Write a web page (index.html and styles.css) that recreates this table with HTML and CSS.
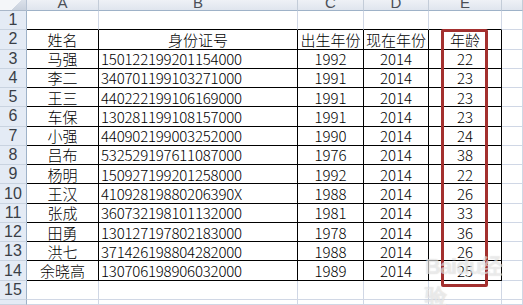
FILE: index.html
```html
<!DOCTYPE html>
<html lang="zh">
<head>
<meta charset="utf-8">
<link rel="stylesheet" href="styles.css">
</head>
<body>
<div class="sheet">
  <div class="corner"></div><div class="ch">A</div><div class="ch">B</div><div class="ch">C</div><div class="ch">D</div><div class="ch">E</div><div class="ch"></div>

  <div class="rh">1</div><div class="c top"></div><div class="c top"></div><div class="c top"></div><div class="c top"></div><div class="c top"></div><div class="c"></div>

  <div class="rh">2</div><div class="c t ctr">姓名</div><div class="c t ctr">身份证号</div><div class="c t ctr">出生年份</div><div class="c t ctr">现在年份</div><div class="c t ctr">年龄</div><div class="c"></div>

  <div class="rh">3</div><div class="c t ctr">马强</div><div class="c t id">150122199201154000</div><div class="c t ctr num">1992</div><div class="c t ctr num">2014</div><div class="c t ctr num">22</div><div class="c"></div>
  <div class="rh">4</div><div class="c t ctr">李二</div><div class="c t id">340701199103271000</div><div class="c t ctr num">1991</div><div class="c t ctr num">2014</div><div class="c t ctr num">23</div><div class="c"></div>
  <div class="rh">5</div><div class="c t ctr">王三</div><div class="c t id">440222199106169000</div><div class="c t ctr num">1991</div><div class="c t ctr num">2014</div><div class="c t ctr num">23</div><div class="c"></div>
  <div class="rh">6</div><div class="c t ctr">车保</div><div class="c t id">130281199108157000</div><div class="c t ctr num">1991</div><div class="c t ctr num">2014</div><div class="c t ctr num">23</div><div class="c"></div>
  <div class="rh">7</div><div class="c t ctr">小强</div><div class="c t id">440902199003252000</div><div class="c t ctr num">1990</div><div class="c t ctr num">2014</div><div class="c t ctr num">24</div><div class="c"></div>
  <div class="rh">8</div><div class="c t ctr">吕布</div><div class="c t id">532529197611087000</div><div class="c t ctr num">1976</div><div class="c t ctr num">2014</div><div class="c t ctr num">38</div><div class="c"></div>
  <div class="rh">9</div><div class="c t ctr">杨明</div><div class="c t id">150927199201258000</div><div class="c t ctr num">1992</div><div class="c t ctr num">2014</div><div class="c t ctr num">22</div><div class="c"></div>
  <div class="rh">10</div><div class="c t ctr">王汉</div><div class="c t id">41092819880206390X</div><div class="c t ctr num">1988</div><div class="c t ctr num">2014</div><div class="c t ctr num">26</div><div class="c"></div>
  <div class="rh">11</div><div class="c t ctr">张成</div><div class="c t id">360732198101132000</div><div class="c t ctr num">1981</div><div class="c t ctr num">2014</div><div class="c t ctr num">33</div><div class="c"></div>
  <div class="rh">12</div><div class="c t ctr">田勇</div><div class="c t id">130127197802183000</div><div class="c t ctr num">1978</div><div class="c t ctr num">2014</div><div class="c t ctr num">36</div><div class="c"></div>
  <div class="rh">13</div><div class="c t ctr">洪七</div><div class="c t id">371426198804282000</div><div class="c t ctr num">1988</div><div class="c t ctr num">2014</div><div class="c t ctr num">26</div><div class="c"></div>
  <div class="rh">14</div><div class="c t ctr">余晓高</div><div class="c t id">130706198906032000</div><div class="c t ctr num">1989</div><div class="c t ctr num">2014</div><div class="c t ctr num">25</div><div class="c"></div>

  <div class="rh">15</div><div class="c"></div><div class="c"></div><div class="c"></div><div class="c"></div><div class="c"></div><div class="c"></div>
  <div class="rh"></div><div class="c"></div><div class="c"></div><div class="c"></div><div class="c"></div><div class="c"></div><div class="c"></div>

  <div class="mark"></div>
  <div class="wm">Baidu经验</div>
</div>
</body>
</html>
```
FILE: styles.css
```css
* { box-sizing: border-box; }
html, body { margin: 0; padding: 0; background: #fff; overflow: hidden; }
.sheet {
  position: relative;
  width: 523px;
  height: 305px;
  display: grid;
  grid-template-columns: 27px 72px 199px 66px 65px 73px 1fr;
  grid-template-rows: 11px repeat(15, 19.27px) 1fr;
  font-family: "Noto Sans CJK SC", sans-serif;
  font-weight: 300;
  font-size: 15px;
  color: #000;
  overflow: hidden;
}
.corner {
  background: linear-gradient(135deg, #f4f6f9 0 60%, transparent 60%),
              linear-gradient(to bottom, #dbe1ea, #c9d1dd);
  border-right: 1px solid #b7c3d3;
  border-bottom: 1px solid #a9b7c9;
}
.ch {
  background: linear-gradient(to bottom, #eef1f6, #dfe5ee);
  border-right: 1px solid #c3ccd8;
  border-bottom: 1px solid #9eb2c8;
  display: flex;
  align-items: flex-end;
  justify-content: center;
  overflow: hidden;
  font-family: "Liberation Sans", Arial, sans-serif;
  font-weight: 400;
  font-size: 15px;
  line-height: 14px;
  color: #4a4f57;
}
.rh {
  background: #e4ebf5;
  border-right: 1px solid #9eb2c8;
  border-bottom: 1px solid #c9d3e0;
  display: flex;
  align-items: center;
  justify-content: center;
  font-family: "Liberation Sans", Arial, sans-serif;
  font-weight: 400;
  font-size: 16px;
  color: #3a3f47;
  line-height: 1;
}
.c {
  border-right: 1px solid #d0d7e5;
  border-bottom: 1px solid #d0d7e5;
  display: flex;
  align-items: center;
  white-space: nowrap;
  overflow: visible;
  line-height: 1;
}
.c.top { border-bottom-color: #000; }
.c.t { border-right-color: #000; border-bottom-color: #000; }
.ctr { justify-content: center; }
.id { padding-left: 2px; letter-spacing: -0.2px; }
.num { letter-spacing: 0; }
.id, .num { font-variant-numeric: tabular-nums; }
.mark {
  position: absolute;
  left: 441px;
  top: 29px;
  width: 47px;
  height: 258px;
  border: 3px solid #a3302f;
  border-radius: 2px;
}
.wm {
  position: absolute;
  left: 425px;
  top: 252px;
  font-family: "Liberation Sans", Arial, sans-serif;
  font-size: 22px;
  font-weight: bold;
  color: rgba(255, 255, 255, 0.55);
  text-shadow: 0 0 1px rgba(120, 120, 120, 0.35);
  letter-spacing: -1px;
}
```
